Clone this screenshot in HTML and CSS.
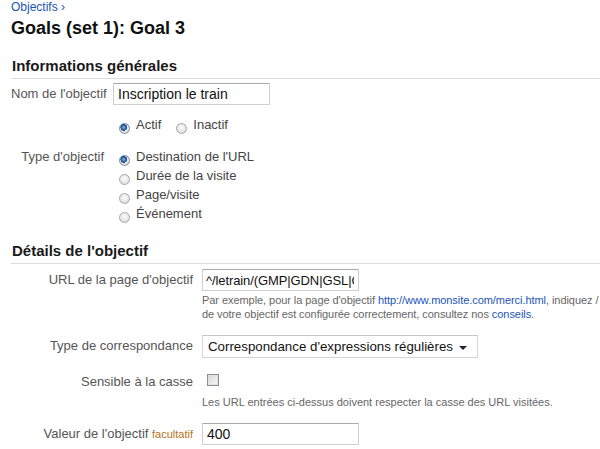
FILE: index.html
```html
<!DOCTYPE html>
<html lang="fr">
<head>
<meta charset="utf-8">
<title>Goals (set 1): Goal 3</title>
<link rel="stylesheet" href="styles.css">
</head>
<body>
<div class="page">
  <a class="crumb" href="#">Objectifs ›</a>
  <h1 class="title">Goals (set 1): Goal 3</h1>

  <h2 class="sec-head sec-general">Informations générales</h2>

  <div class="row row-name narrow">
    <label class="lbl">Nom de l'objectif</label>
    <div class="field"><input class="text text-name" type="text" value="Inscription le train"></div>
  </div>

  <div class="row row-active narrow">
    <span class="lbl"></span>
    <div class="field opts-inline">
      <label class="opt"><input class="radio" type="radio" name="state" checked><span>Actif</span></label>
      <label class="opt"><input class="radio" type="radio" name="state"><span>Inactif</span></label>
    </div>
  </div>

  <div class="row row-type narrow">
    <span class="lbl radio-lbl">Type d'objectif</span>
    <div class="field opts-stack">
      <label class="opt"><input class="radio" type="radio" name="type" checked><span>Destination de l'URL</span></label>
      <label class="opt"><input class="radio" type="radio" name="type"><span>Durée de la visite</span></label>
      <label class="opt"><input class="radio" type="radio" name="type"><span>Page/visite</span></label>
      <label class="opt"><input class="radio" type="radio" name="type"><span>Événement</span></label>
    </div>
  </div>

  <h2 class="sec-head sec-details">Détails de l'objectif</h2>

  <div class="row row-url wide">
    <label class="lbl">URL de la page d'objectif</label>
    <div class="field">
      <input class="text text-short text-url" type="text" value="^/letrain/(GMP|GDN|GSL|GSP)/merci">
      <p class="help help-url">Par exemple, pour la page d'objectif <a href="#">http://www.monsite.com/merci.html</a>, indiquez /<br>de votre objectif est configurée correctement, consultez nos <a href="#">conseils</a>.</p>
    </div>
  </div>

  <div class="row row-match wide">
    <label class="lbl">Type de correspondance</label>
    <div class="field">
      <div class="select"><span class="select-text">Correspondance d'expressions régulières</span><span class="caret"></span></div>
    </div>
  </div>

  <div class="row row-case wide">
    <label class="lbl radio-lbl">Sensible à la casse</label>
    <div class="field">
      <div class="check-line"><input class="check" type="checkbox"></div>
      <p class="help help-case">Les URL entrées ci-dessus doivent respecter la casse des URL visitées.</p>
    </div>
  </div>

  <div class="row row-value wide">
    <label class="lbl">Valeur de l'objectif <span class="optional">facultatif</span></label>
    <div class="field"><input class="text text-short" type="text" value="400"></div>
  </div>
</div>
</body>
</html>
```

FILE: styles.css
```css
html, body {
  margin: 0;
  padding: 0;
  background: #ffffff;
  overflow: hidden;
}

body {
  font-family: "Liberation Sans", Arial, sans-serif;
  font-size: 13px;
  color: #444;
}

.page {
  padding-left: 11px;
  width: 589px;
}

a {
  color: #1a55b8;
  text-decoration: none;
}

.crumb {
  display: block;
  font-size: 12px;
  line-height: 15px;
}

.title {
  margin: 2px 0 0;
  font-size: 18px;
  line-height: 22px;
  font-weight: bold;
  color: #111;
}

.sec-head {
  margin: 0;
  font-size: 15px;
  line-height: 18px;
  font-weight: bold;
  color: #1a1a1a;
  padding: 0 0 3px 1px;
  border-bottom: 1px solid #dcdcdc;
}

.sec-general { margin-top: 18px; }
.sec-details { margin-top: 19px; }

.row {
  display: flex;
  align-items: flex-start;
  column-gap: 9px;
}

.narrow .lbl { width: 93px; }
.wide .lbl { width: 182px; }

.lbl {
  flex: none;
  text-align: right;
  line-height: 20px;
  padding-top: 1px;
  color: #555;
  white-space: nowrap;
}

.lbl.radio-lbl {
  line-height: 19px;
  padding-top: 0;
}

.field {
  flex: 1;
  min-width: 0;
  white-space: nowrap;
}

.row-name { margin-top: 4px; }
.row-active { margin-top: 10px; }
.row-type { margin-top: 13px; }
.row-url { margin-top: 5px; }
.row-match { margin-top: 14px; }
.row-case { margin-top: 14px; }
.row-value { margin-top: 14px; }

.text {
  display: block;
  box-sizing: border-box;
  height: 22px;
  margin: 0;
  padding: 0 4px;
  font-family: "Liberation Sans", Arial, sans-serif;
  font-size: 14px;
  line-height: 20px;
  color: #111;
  background: #fff;
  border: 1px solid #cfcfcf;
  border-top-color: #a9a9a9;
  border-radius: 0;
  outline: none;
}

.text-name { width: 157px; }
.text-short { width: 157px; }
.text-url {
  font-size: 13px;
  letter-spacing: -0.1px;
  padding-left: 3px;
}

.opts-inline {
  display: flex;
  column-gap: 9px;
}

.opts-stack {
  display: flex;
  flex-direction: column;
}

.opt {
  display: flex;
  align-items: flex-start;
  line-height: 19px;
  color: #444;
}

.radio {
  appearance: none;
  -webkit-appearance: none;
  flex: none;
  box-sizing: border-box;
  width: 11px;
  height: 11px;
  margin: 8px 6px 0 6px;
  border: 1px solid #a8a8a8;
  border-radius: 50%;
  background: radial-gradient(circle at 50% 40%, #fbfbfb 0, #e8e8e8 55%, #d4d4d4 100%);
}

.radio:checked {
  border-color: #7d8a99;
  background:
    radial-gradient(circle at 42% 38%, #8fb6e2 0, #2f6db3 28%, #173f78 42%, transparent 46%),
    radial-gradient(circle at 50% 40%, #fbfbfb 0, #e6e6e6 55%, #cdcdcd 100%);
}

.help {
  margin: 2px 0 0;
  font-size: 11px;
  line-height: 14px;
  color: #666;
  white-space: nowrap;
}

.help-url { letter-spacing: -0.06px; }
.help-case { margin-top: 2px; }

.select {
  box-sizing: border-box;
  width: 276px;
  height: 23px;
  display: flex;
  align-items: center;
  padding: 0 10px 0 5px;
  border: 1px solid #d4d4d4;
  border-top-color: #c4c4c4;
  background: #fff;
  font-size: 13.3px;
  line-height: 21px;
  color: #111;
}

.caret {
  flex: none;
  margin-left: auto;
  width: 0;
  height: 0;
  border-left: 4px solid transparent;
  border-right: 4px solid transparent;
  border-top: 4px solid #222;
  margin-top: 2px;
}

.check-line {
  height: 19px;
}

.check {
  appearance: none;
  -webkit-appearance: none;
  display: block;
  box-sizing: border-box;
  width: 12px;
  height: 12px;
  margin: 2px 0 0 5px;
  border: 1px solid #8e8e8e;
  background: linear-gradient(135deg, #d6d6d6 0, #ececec 60%, #f8f8f8 100%);
  box-shadow: inset 0 0 0 1px #e2e2e2;
}

.optional {
  font-size: 11px;
  color: #b5731c;
}
```
